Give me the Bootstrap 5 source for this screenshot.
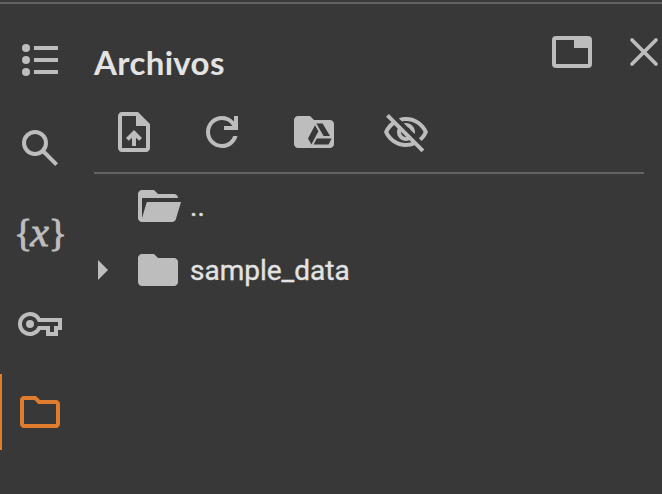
<!DOCTYPE html>
<html lang="es" data-bs-theme="dark">
<head>
<meta charset="utf-8">
<meta name="viewport" content="width=device-width, initial-scale=1">
<title>Archivos</title>
<link href="https://cdn.jsdelivr.net/npm/bootstrap@5.3.0/dist/css/bootstrap.min.css" rel="stylesheet">
<style>
:root { --surface: #383838; --line: #636363; --icon: #bdbdbd; --ink: #e3e3e3; --accent: #df7c2e; }
body { background: var(--surface); color: var(--ink); font-family: Roboto, sans-serif; }
svg { display: block; fill: currentColor; }
.app { padding-top: 2px; }
.app-body { border-top: 2px solid var(--line); color: var(--icon); }
.rail { width: 80px; padding-top: 12px; }
.rail-btn { width: 80px; height: 88px; color: inherit; background: none; border: 0; }
.rail-btn.active { color: var(--accent); }
.rail-btn.active::before { content: ""; position: absolute; left: 0; top: 6px; width: 2px; height: 76px; background: var(--accent); }
.ico { width: 48px; height: 48px; }
.vars { font: 38px/44px "Liberation Serif", serif; -webkit-text-stroke: .9px; padding: 0 1px 7px 0; letter-spacing: -2px; }
.vars i { font-size: 42px; line-height: 1; letter-spacing: 0; }
.plain { padding: 0; border: 0; background: none; color: inherit; }
.panel { padding-left: 14px; }
.panel-head { height: 96px; }
.panel-title { font: 700 33px/40px Lato, sans-serif; letter-spacing: .35px; color: var(--ink); padding-top: 38px; }
.head-actions { padding-top: 24px; gap: 24px; }
.tools { gap: 40px; height: 74px; margin-right: 18px; border-bottom: 2px solid var(--line); padding: 8px 0 0 16px; }
.drive { margin: 0 4px; }
.tree { padding-top: 8px; }
.tree-row { height: 64px; color: var(--ink); font-size: 28px; line-height: 50px; align-items: flex-start; }
.tree-row svg { color: var(--icon); }
.twist { width: 40px; height: 48px; }
.tree-name { padding-left: 8px; -webkit-text-stroke: .35px; }
</style>
</head>
<body class="overflow-hidden">
<div class="app vh-100">
<div class="app-body d-flex h-100">
  <nav class="rail d-flex flex-column flex-shrink-0" aria-label="Secciones">
    <button class="rail-btn d-flex align-items-center justify-content-center p-0"><svg class="ico" viewBox="0 0 24 24"><circle cx="5" cy="6" r="2"/><circle cx="5" cy="12" r="2"/><circle cx="5" cy="18" r="2"/><path d="M9 5h12v2H9zM9 11h12v2H9zM9 17h12v2H9z"/></svg></button>
    <button class="rail-btn d-flex align-items-center justify-content-center p-0"><svg class="ico" viewBox="0 0 24 24"><g fill="none" stroke="currentColor" stroke-width="2"><circle cx="9.500" cy="9.500" r="5.500"/><path d="M13.500 13.500l6.800 6.800"/></g></svg></button>
    <button class="rail-btn d-flex align-items-center justify-content-center p-0"><span class="vars">{<i>x</i>}</span></button>
    <button class="rail-btn d-flex align-items-center justify-content-center p-0"><svg class="ico" viewBox="0 0 24 24"><path d="M11.58 10H22v4h-2v3h-4v-3h-4.42a5 5 0 1 1 0-4z" fill="none" stroke="currentColor" stroke-width="2"/><circle cx="7" cy="12" r="2"/></svg></button>
    <button class="rail-btn active position-relative d-flex align-items-center justify-content-center p-0"><svg class="ico" viewBox="0 0 24 24"><path d="M9.17 6l2 2H20v10H4V6h5.17M10 4H4c-1.1 0-2 .9-2 2v12c0 1.1.9 2 2 2h16c1.1 0 2-.9 2-2V8c0-1.100-.9-2-2-2h-8l-2-2z"/></svg></button>
  </nav>
  <main class="panel flex-grow-1">
    <header class="panel-head d-flex justify-content-between">
      <h1 class="panel-title m-0">Archivos</h1>
      <div class="head-actions d-flex align-items-start">
        <button class="plain"><svg class="ico" viewBox="0 0 24 24"><path fill-rule="evenodd" d="M4 4h16a2 2 0 0 1 2 2v12a2 2 0 0 1-2 2H4a2 2 0 0 1-2-2V6a2 2 0 0 1 2-2zm0 2v12h16v-8h-7V6z"/></svg></button>
        <button class="plain"><svg width="42" height="48" viewBox="0 0 42 48"><path d="M12 12l24 24M36 12l-24 24" stroke="currentColor" stroke-width="3.700" stroke-linecap="round"/></svg></button>
      </div>
    </header>
    <div class="tools d-flex" role="toolbar">
      <button class="plain ico"><svg class="ico" viewBox="0 0 24 24"><path d="M14 2H6c-1.100 0-1.990.9-1.990 2L4 20c0 1.100.89 2 1.990 2H18c1.100 0 2-.9 2-2V8l-6-6zm4 18H6V4h7v5h5v11zM8 15.010l1.410 1.410L11 14.840V19h2v-4.160l1.590 1.590L16 15.010 12.010 11z"/></svg></button>
      <button class="plain ico"><svg class="ico" viewBox="0 0 24 24"><path d="M12 20q-3.350 0-5.675-2.325T4 12t2.325-5.675T12 4q1.725 0 3.300.712T18 6.750V4h2v7h-7V9h4.200q-.8-1.400-2.187-2.200T12 6Q9.500 6 7.750 7.750T6 12t1.750 4.250T12 18q1.925 0 3.475-1.100T17.650 14h2.100q-.7 2.650-2.850 4.325T12 20Z"/></svg></button>
      <button class="plain ico drive"><svg class="ico" viewBox="0 0 24 24"><path d="M4 20q-.825 0-1.412-.587T2 18V6q0-.825.588-1.413T4 4h6l2 2h8q.825 0 1.413.588T22 8v10q0 .825-.587 1.413T20 20Z"/><path fill="#383838" d="M13.200 7.700h3.100L20 14h-3.200zM12.500 8.600l1.700 3-3.500 6.700L9 15.200zM13.400 15.200h7.400l-1.500 3.100h-7.500z"/></svg></button>
      <button class="plain ico"><svg class="ico" viewBox="0 -.5 24 24"><path d="M12 6c3.790 0 7.170 2.130 8.820 5.500-.59 1.220-1.420 2.270-2.410 3.120l1.410 1.410c1.390-1.230 2.490-2.770 3.180-4.530C21.270 7.110 17 4 12 4c-1.270 0-2.490.2-3.640.57l1.650 1.650C10.660 6.090 11.320 6 12 6zm-1.070 1.140L13 9.210c.57.25 1.030.71 1.280 1.280l2.070 2.070c.08-.34.14-.7.14-1.070C16.500 9.010 14.480 7 12 7c-.37 0-.72.05-1.070.14zM2.010 3.870l2.680 2.680C3.060 7.830 1.770 9.530 1 11.500 2.730 15.890 7 19 12 19c1.520 0 2.980-.29 4.320-.82l3.420 3.420 1.410-1.410L3.420 2.450 2.010 3.870zm7.500 7.500l2.610 2.610c-.04.01-.08.02-.12.02-1.380 0-2.500-1.120-2.500-2.500 0-.05.01-.08.01-.13zm-3.400-3.400l1.750 1.750c-.23.55-.36 1.150-.36 1.780 0 2.480 2.020 4.500 4.500 4.500.63 0 1.230-.13 1.770-.36l.98.98c-.88.24-1.800.38-2.750.38-3.790 0-7.170-2.130-8.820-5.500.7-1.430 1.720-2.610 2.930-3.530z"/></svg></button>
    </div>
    <div class="tree" role="tree">
      <div class="tree-row d-flex" role="treeitem"><span class="twist"></span><svg class="ico" viewBox="0 0 24 24"><path d="M4 20q-.825 0-1.412-.587T2 18V6q0-.825.588-1.413T4 4h6l2 2h8q.825 0 1.413.588T22 8H4v10l2.400-8h17.100l-2.575 8.575q-.2.650-.737 1.038T19 20H4Z"/></svg><span class="tree-name">..</span></div>
      <div class="tree-row d-flex" role="treeitem"><svg class="twist" viewBox="0 0 40 48"><path d="M4 14l10 10L4 34z"/></svg><svg class="ico" viewBox="0 0 24 24"><path d="M4 20q-.825 0-1.412-.587T2 18V6q0-.825.588-1.413T4 4h6l2 2h8q.825 0 1.413.588T22 8v10q0 .825-.587 1.413T20 20Z"/></svg><span class="tree-name">sample_data</span></div>
    </div>
  </main>
</div>
</div>
<script src="https://cdn.jsdelivr.net/npm/bootstrap@5.3.0/dist/js/bootstrap.bundle.min.js"></script>
</body>
</html>
